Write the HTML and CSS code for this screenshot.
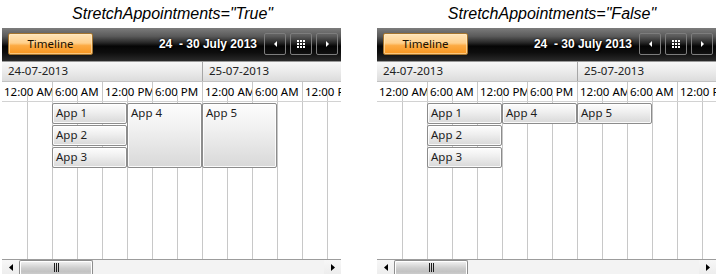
FILE: index.html
```html
<!DOCTYPE html>
<html>
<head>
<meta charset="utf-8">
<title>StretchAppointments</title>
<link rel="stylesheet" href="styles.css">
</head>
<body>
<div class="page">
  <section class="column">
    <div class="title title-left">StretchAppointments="True"</div>
    <div class="scheduler">
      <div class="toolbar">
        <div class="view-btn">Timeline</div>
        <div class="spacer"></div>
        <div class="range">24&nbsp; - 30 July 2013</div>
        <div class="nav">
          <div class="nav-btn"><svg width="3" height="6" viewBox="0 0 3 6"><path d="M3 0V6L0 3Z" fill="#fff"/></svg></div>
          <div class="nav-btn"><svg width="8" height="8" viewBox="0 0 8 8"><path d="M0 0h2v2H0zM3 0h2v2H3zM6 0h2v2H6zM0 3h2v2H0zM3 3h2v2H3zM6 3h2v2H6zM0 6h2v2H0zM3 6h2v2H3zM6 6h2v2H6z" fill="#fff"/></svg></div>
          <div class="nav-btn"><svg width="3" height="6" viewBox="0 0 3 6"><path d="M0 0V6L3 3Z" fill="#fff"/></svg></div>
        </div>
      </div>
      <div class="dates">
        <div class="date">24-07-2013</div>
        <div class="date">25-07-2013</div>
      </div>
      <div class="times">
        <div class="time">12:00 AM</div>
        <div class="time">6:00 AM</div>
        <div class="time">12:00 PM</div>
        <div class="time">6:00 PM</div>
        <div class="time">12:00 AM</div>
        <div class="time">6:00 AM</div>
        <div class="time">12:00 PM</div>
      </div>
      <div class="content">
        <div class="appt" style="left:50px;top:1px">App 1</div>
        <div class="appt" style="left:50px;top:23px">App 2</div>
        <div class="appt" style="left:50px;top:45px">App 3</div>
        <div class="appt appt-stretch" style="left:125px;top:1px">App 4</div>
        <div class="appt appt-stretch" style="left:200px;top:1px">App 5</div>
      </div>
      <div class="hscroll">
        <div class="arrow"><svg width="4" height="7" viewBox="0 0 4 7"><path d="M4 0V7L0 3.5Z" fill="#000"/></svg></div>
        <div class="thumb"><span class="grip"></span><span class="grip"></span><span class="grip"></span></div>
        <div class="track"></div>
        <div class="arrow"><svg width="4" height="7" viewBox="0 0 4 7"><path d="M0 0V7L4 3.5Z" fill="#000"/></svg></div>
      </div>
    </div>
  </section>

  <section class="column">
    <div class="title title-right">StretchAppointments="False"</div>
    <div class="scheduler">
      <div class="toolbar">
        <div class="view-btn">Timeline</div>
        <div class="spacer"></div>
        <div class="range">24&nbsp; - 30 July 2013</div>
        <div class="nav">
          <div class="nav-btn"><svg width="3" height="6" viewBox="0 0 3 6"><path d="M3 0V6L0 3Z" fill="#fff"/></svg></div>
          <div class="nav-btn"><svg width="8" height="8" viewBox="0 0 8 8"><path d="M0 0h2v2H0zM3 0h2v2H3zM6 0h2v2H6zM0 3h2v2H0zM3 3h2v2H3zM6 3h2v2H6zM0 6h2v2H0zM3 6h2v2H3zM6 6h2v2H6z" fill="#fff"/></svg></div>
          <div class="nav-btn"><svg width="3" height="6" viewBox="0 0 3 6"><path d="M0 0V6L3 3Z" fill="#fff"/></svg></div>
        </div>
      </div>
      <div class="dates">
        <div class="date">24-07-2013</div>
        <div class="date">25-07-2013</div>
      </div>
      <div class="times">
        <div class="time">12:00 AM</div>
        <div class="time">6:00 AM</div>
        <div class="time">12:00 PM</div>
        <div class="time">6:00 PM</div>
        <div class="time">12:00 AM</div>
        <div class="time">6:00 AM</div>
        <div class="time">12:00 PM</div>
      </div>
      <div class="content">
        <div class="appt" style="left:50px;top:1px">App 1</div>
        <div class="appt" style="left:50px;top:23px">App 2</div>
        <div class="appt" style="left:50px;top:45px">App 3</div>
        <div class="appt" style="left:125px;top:1px">App 4</div>
        <div class="appt" style="left:200px;top:1px">App 5</div>
      </div>
      <div class="hscroll">
        <div class="arrow"><svg width="4" height="7" viewBox="0 0 4 7"><path d="M4 0V7L0 3.5Z" fill="#000"/></svg></div>
        <div class="thumb"><span class="grip"></span><span class="grip"></span><span class="grip"></span></div>
        <div class="track"></div>
        <div class="arrow"><svg width="4" height="7" viewBox="0 0 4 7"><path d="M0 0V7L4 3.5Z" fill="#000"/></svg></div>
      </div>
    </div>
  </section>
</div>
</body>
</html>
```

FILE: styles.css
```css
* { box-sizing: border-box; }
html, body { margin: 0; padding: 0; }
body {
  width: 717px;
  height: 274px;
  overflow: hidden;
  background: #fff;
  font-family: "Noto Sans", "Open Sans", sans-serif;
}
.page {
  display: flex;
  gap: 36px;
  padding-left: 2px;
}
.column {
  width: 339px;
  flex: 0 0 339px;
  display: flex;
  flex-direction: column;
}
.title {
  height: 28px;
  font: italic 16px/28px "Liberation Sans", Arial, sans-serif;
  color: #000;
  text-align: center;
  white-space: nowrap;
}
.title-left { padding-left: 2px; }
.title-right { padding-left: 11px; }

.scheduler {
  width: 339px;
  display: flex;
  flex-direction: column;
  overflow: hidden;
}

/* toolbar */
.toolbar {
  height: 33px;
  flex: 0 0 33px;
  display: flex;
  align-items: flex-start;
  padding: 5px 3px 0 6px;
  background: linear-gradient(to bottom, #7c7c7c 0%, #5a5a5a 25%, #262626 45%, #050505 55%, #0e0e0e 75%, #2a2a2a 100%);
}
.view-btn {
  width: 85px;
  height: 22px;
  border: 1px solid #a4742e;
  border-radius: 2px;
  background: linear-gradient(to bottom, #ffe4b8 0%, #ffd08c 45%, #fcab44 58%, #f8961f 100%);
  box-shadow: inset 0 0 0 1px rgba(255, 236, 200, 0.55);
  font-size: 11.5px;
  line-height: 20px;
  text-align: center;
  color: #1a1000;
}
.spacer { flex: 1; }
.range {
  font: bold 12px/22px "Liberation Sans", Arial, sans-serif;
  color: #fff;
  white-space: nowrap;
  text-shadow: 0 0 2px #000, 1px 1px 1px #000;
  margin-right: 7px;
}
.nav {
  display: flex;
  gap: 4px;
}
.nav-btn {
  width: 22px;
  height: 22px;
  border: 1px solid #7d7d7d;
  border-radius: 2px;
  display: flex;
  align-items: center;
  justify-content: center;
}
.nav-btn svg { display: block; }

/* date header */
.dates {
  height: 21px;
  flex: 0 0 21px;
  display: flex;
  border-top: 1px solid #9a9a9a;
  border-bottom: 1px solid #c2c2c2;
  background: linear-gradient(to bottom, #f8f8f8 0%, #ebebeb 50%, #dcdcdc 100%);
}
.date {
  flex: 0 0 200px;
  padding-left: 6px;
  font-size: 11.5px;
  line-height: 17px;
  color: #222;
  white-space: nowrap;
}
.date + .date { border-left: 1px solid #a6a6a6; }

/* time header */
.times {
  height: 20px;
  flex: 0 0 20px;
  display: flex;
  border-bottom: 1px solid #d2d2d2;
  background-color: #fff;
  background-image: repeating-linear-gradient(to right, #c8c8c8 0 1px, transparent 1px 50px);
  background-repeat: no-repeat;
  background-position: 25px 100%;
  background-size: calc(100% - 25px) 6px;
}
.time {
  flex: 0 0 50px;
  overflow: hidden;
  white-space: nowrap;
  padding-left: 2px;
  font-size: 11.5px;
  line-height: 19px;
  color: #000;
}
.time + .time { border-left: 1px solid #c8c8c8; }

/* content grid */
.content {
  position: relative;
  height: 157px;
  flex: 0 0 157px;
  background-color: #fff;
  background-image: repeating-linear-gradient(to right, #c8c8c8 0 1px, transparent 1px 25px);
  background-repeat: no-repeat;
  background-position: 25px 0;
  background-size: calc(100% - 25px) 100%;
}
.appt {
  position: absolute;
  width: 75px;
  height: 21px;
  border: 1px solid #8c8c8c;
  border-radius: 2px;
  background: linear-gradient(to bottom, #fdfdfd 0%, #f0f0f0 40%, #d8d8d8 100%);
  box-shadow: inset 0 0 0 1px rgba(255, 255, 255, 0.85);
  padding: 1px 3px 0;
  font-size: 11.5px;
  line-height: 16px;
  color: #1c1c1c;
  white-space: nowrap;
  overflow: hidden;
}
.appt-stretch { height: 65px; }

/* horizontal scrollbar */
.hscroll {
  height: 17px;
  flex: 0 0 17px;
  display: flex;
  border-top: 1px solid #9c9c9c;
  background: linear-gradient(to bottom, #f7f7f7, #ececec);
}
.arrow {
  width: 17px;
  flex: 0 0 17px;
  display: flex;
  align-items: flex-start;
  justify-content: center;
  padding-top: 4px;
}
.arrow svg { display: block; }
.thumb {
  width: 74px;
  flex: 0 0 74px;
  height: 17px;
  border: 1px solid #8d8d8d;
  border-bottom: none;
  border-radius: 2px 2px 0 0;
  background: linear-gradient(to bottom, #f4f4f4 0%, #e2e2e2 20%, #cdcdcd 45%, #c3c3c3 65%, #d5d5d5 100%);
  box-shadow: inset 1px 1px 0 #fff, inset -1px 0 0 #fff;
  display: flex;
  justify-content: center;
  align-items: flex-start;
  gap: 1px;
  padding-top: 2px;
}
.grip {
  width: 1px;
  height: 9px;
  background: #1e1e1e;
}
.track { flex: 1; background: #f3f3f3; }
```
